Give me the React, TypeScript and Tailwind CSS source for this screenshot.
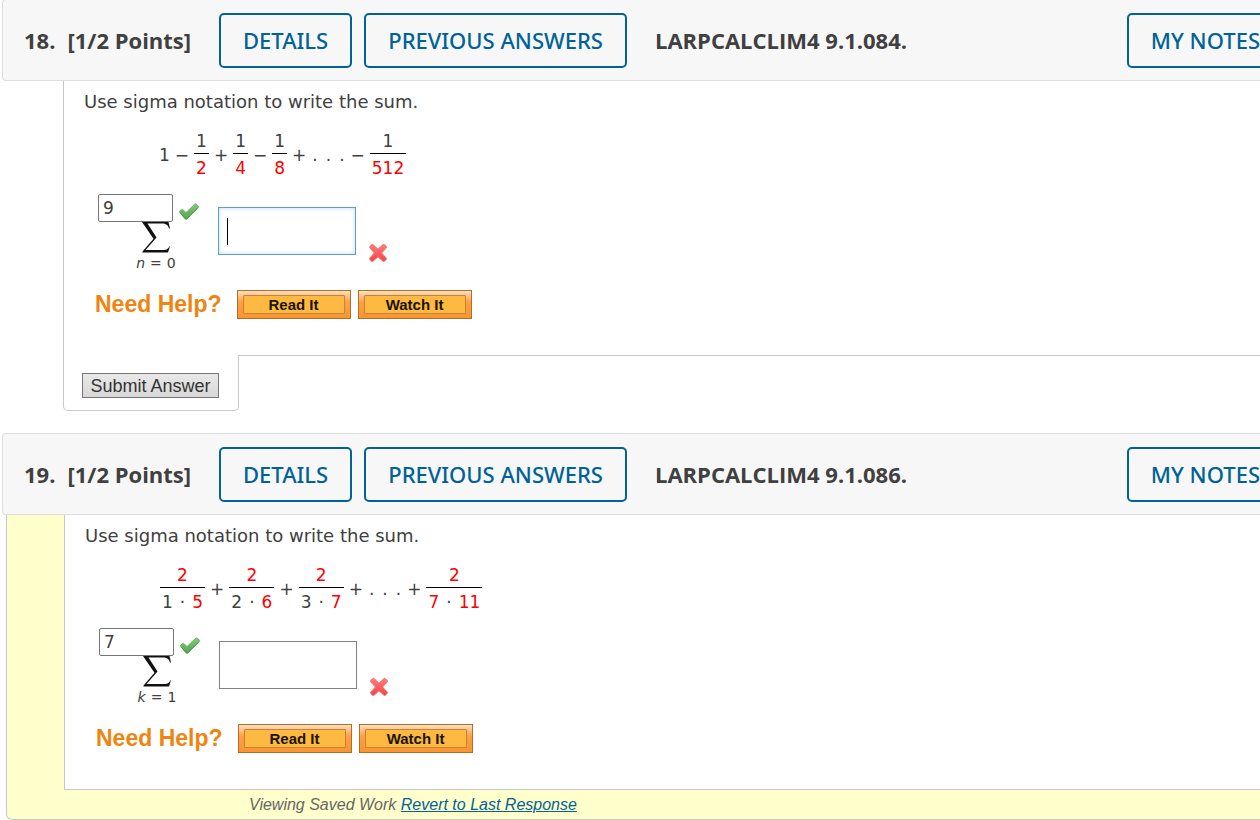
import { useState } from "react";
import type { ReactNode } from "react";

const outlineButton =
  "h-[55px] shrink-0 whitespace-nowrap rounded-[5px] border-2 border-[#006298] px-[22px] font-['Noto_Sans',sans-serif] text-[22px] font-medium text-[#006298]";

function QuestionHeader({ number, code }: { number: number; code: string }) {
  return (
    <header className="ml-[2px] flex h-[82px] items-center overflow-hidden rounded-l-[4px] border border-r-0 border-[#dedede] bg-[#f7f7f7] font-['Open_Sans',sans-serif] text-[22px] text-[#404040]">
      <h2 className="flex w-[216px] shrink-0 gap-3 whitespace-nowrap pl-[21px] font-bold">
        <span>{number}.</span>
        <span>[1/2 Points]</span>
      </h2>
      <button type="button" className={outlineButton}>DETAILS</button>
      <button type="button" className={`${outlineButton} ml-3`}>PREVIOUS ANSWERS</button>
      <h3 className="ml-7 shrink-0 whitespace-nowrap font-bold">{code}</h3>
      <button type="button" className={`${outlineButton} -mr-6 ml-auto`}>MY NOTES</button>
    </header>
  );
}

function Op({ children }: { children: ReactNode }) {
  return <span className="px-[5px]">{children}</span>;
}

function Dots() {
  return (
    <span className="flex gap-2 px-px">
      <span>.</span>
      <span>.</span>
      <span>.</span>
    </span>
  );
}

function Fraction({ top, children }: { top: ReactNode; children: ReactNode }) {
  return (
    <span className="flex flex-col items-center">
      <span className="leading-6">{top}</span>
      <span className="flex w-full justify-center gap-[7px] border-t border-black px-[2px] leading-7">
        {children}
      </span>
    </span>
  );
}

function Red({ children }: { children: ReactNode }) {
  return <span className="text-[#ff0000]">{children}</span>;
}

function CheckIcon() {
  return (
    <svg role="img" aria-label="Correct" width="22" height="20" viewBox="0 0 22 20">
      <defs>
        <linearGradient id="check-fill" x1="0" y1="0" x2="0" y2="1">
          <stop offset="0" stopColor="#84c97b" />
          <stop offset="1" stopColor="#55a551" />
        </linearGradient>
      </defs>
      <path
        d="M1.6 10.2 Q1.2 9.4 2 8.9 L3.8 7.6 Q4.6 7.2 5.3 7.9 L8 10.6 L16.6 2.3 Q17.5 1.6 18.3 2.3 L20.4 4 Q21 4.7 20.3 5.4 L9.2 16.8 Q8 17.8 7 16.8 Z"
        fill="url(#check-fill)"
        stroke="#6db566"
        strokeLinejoin="round"
      />
      <path d="M2.6 11.6 L7.4 16.7 Q8.1 17.2 8.9 16.6 L19.8 5.8" fill="none" stroke="#4c9549" strokeWidth="1" />
    </svg>
  );
}

function CrossIcon() {
  return (
    <svg role="img" aria-label="Incorrect" width="20" height="20" viewBox="0 0 20 20">
      <defs>
        <linearGradient id="cross-fill" x1="0" y1="0" x2="0" y2="1">
          <stop offset="0" stopColor="#ff7c7c" />
          <stop offset="1" stopColor="#f24444" />
        </linearGradient>
      </defs>
      <path
        d="M3.6 1.6 Q4.4 1 5.2 1.7 L10 6.2 L14.8 1.7 Q15.7 1 16.5 1.7 L18.2 3.4 Q18.8 4.2 18.1 5 L13.6 10 L18.1 15 Q18.8 15.8 18.1 16.6 L16.5 18.2 Q15.7 18.8 14.9 18.2 L10 13.8 L5.1 18.2 Q4.3 18.8 3.5 18.2 L1.8 16.6 Q1.1 15.8 1.8 15 L6.4 10 L1.9 5 Q1.2 4.2 1.9 3.4 Z"
        fill="url(#cross-fill)"
        stroke="#f27070"
      />
    </svg>
  );
}

function SigmaIcon() {
  return (
    <svg role="img" aria-label="Sum" width="28" height="31" viewBox="0 0 28 31">
      <path
        d="M0 0 H26.5 L28 6.5 H27 C26 3 24 1.6 20 1.6 H5.5 L14.5 15.5 L3.6 28 H21 C25 28 26.5 26.5 27.5 24 H28 L26 30.5 H0.5 V29.5 L11.5 16.8 Z"
        fill="#111"
      />
    </svg>
  );
}

function SigmaAnswer({ upper, lower, active }: { upper: string; lower: ReactNode; active?: boolean }) {
  const [limit, setLimit] = useState(upper);
  const [term, setTerm] = useState("");
  return (
    <div className="mt-3 flex pl-[14px]">
      <div className="w-[120px]">
        <div className="flex h-7 items-center gap-[5px]">
          <input
            aria-label="Upper limit"
            value={limit}
            onChange={(e) => setLimit(e.target.value)}
            className="h-7 w-[75px] rounded-[2px] border border-[#767676] bg-white px-1 text-[17px] text-[#404040]"
          />
          <span className="pt-2"><CheckIcon /></span>
        </div>
        <div className="flex w-[116px] flex-col items-center">
          <SigmaIcon />
          <span className="flex gap-[5px] text-[14px] leading-[21px]">{lower}</span>
        </div>
      </div>
      <div
        className={
          active
            ? "mt-[13px] flex h-12 w-[138px] items-center border border-[#6699cc] bg-white px-2 shadow-[inset_0_0_4px_#bbddff]"
            : "mt-[13px] flex h-12 w-[138px] items-center border border-[#808080] bg-white px-2"
        }
      >
        {active && <span aria-hidden="true" className="h-[27px] w-px shrink-0 bg-black" />}
        <input
          aria-label="Summand"
          value={term}
          onChange={(e) => setTerm(e.target.value)}
          className="h-full min-w-0 flex-1 bg-transparent text-[17px] outline-none"
        />
      </div>
      <span className="ml-3 mt-[49px]"><CrossIcon /></span>
    </div>
  );
}

function HelpButton({ children }: { children: ReactNode }) {
  return (
    <button
      type="button"
      className="h-[29px] w-[114px] border border-[#b06f28] bg-linear-to-b from-[#ffe0c0] via-[#ff9f45] via-40% to-[#f9952f] px-[5px] py-1 text-[15px] font-bold text-[#1a1400]"
    >
      <span className="flex h-full items-center justify-center rounded-[1px] border border-[#c58435] bg-[#fdb941] pt-px">
        {children}
      </span>
    </button>
  );
}

function NeedHelp() {
  return (
    <div className="mt-4 flex items-center gap-[7px] pl-[11px] font-['Liberation_Sans',sans-serif]">
      <span className="mr-2 text-[23px] font-bold leading-[29px] text-[#f08410]">Need Help?</span>
      <HelpButton>Read It</HelpButton>
      <HelpButton>Watch It</HelpButton>
    </div>
  );
}

function Prompt({ children }: { children: ReactNode }) {
  return (
    <>
      <p className="pt-[7px] text-[18px] leading-7">Use sigma notation to write the sum.</p>
      <div className="mt-[13px] flex items-center whitespace-nowrap pl-[75px]">{children}</div>
    </>
  );
}

export default function App() {
  return (
    <main className="overflow-hidden bg-white font-['DejaVu_Sans',sans-serif] text-[17px] text-[#404040]">
      <article>
        <div className="-mt-px">
          <QuestionHeader number={18} code="LARPCALCLIM4 9.1.084." />
        </div>
        <div className="ml-[63px]">
          <div className="border-l border-[#c8c8c8] pb-9 pl-5">
            <Prompt>
              <span>1</span>
              <Op>−</Op>
              <Fraction top="1"><Red>2</Red></Fraction>
              <Op>+</Op>
              <Fraction top="1"><Red>4</Red></Fraction>
              <Op>−</Op>
              <Fraction top="1"><Red>8</Red></Fraction>
              <Op>+</Op>
              <Dots />
              <Op>−</Op>
              <Fraction top="1"><Red>512</Red></Fraction>
            </Prompt>
            <SigmaAnswer upper="9" lower={<><i>n</i><span>=</span><span>0</span></>} active />
            <NeedHelp />
          </div>
          <div className="flex">
            <div className="w-[176px] shrink-0 rounded-b-[5px] border border-t-0 border-[#c8c8c8] pb-3 pl-[18px] pt-[18px]">
              <button
                type="button"
                className="block h-[25px] w-[137px] whitespace-nowrap border border-[#767676] bg-linear-to-b from-[#e8e8e8] to-[#d8d8d8] font-['Liberation_Sans',sans-serif] text-[18px] leading-[22px] text-[#333]"
              >
                Submit Answer
              </button>
            </div>
            <div className="flex-1 border-t border-[#c8c8c8]" />
          </div>
        </div>
      </article>

      <article className="mt-[22px]">
        <QuestionHeader number={19} code="LARPCALCLIM4 9.1.086." />
        <div className="ml-[6px] rounded-bl-[6px] border-b border-l border-[#c8c8c8] bg-[#ffffcc]">
          <div className="ml-[57px] border-b border-l border-[#c8c8c8] bg-white pb-9 pl-5">
            <Prompt>
              <Fraction top={<Red>2</Red>}><span>1</span><span>·</span><Red>5</Red></Fraction>
              <Op>+</Op>
              <Fraction top={<Red>2</Red>}><span>2</span><span>·</span><Red>6</Red></Fraction>
              <Op>+</Op>
              <Fraction top={<Red>2</Red>}><span>3</span><span>·</span><Red>7</Red></Fraction>
              <Op>+</Op>
              <Dots />
              <Op>+</Op>
              <Fraction top={<Red>2</Red>}><Red>7</Red><span>·</span><Red>11</Red></Fraction>
            </Prompt>
            <SigmaAnswer upper="7" lower={<><i>k</i><span>=</span><span>1</span></>} />
            <NeedHelp />
          </div>
          <p className="pl-[242px] font-['Liberation_Sans',sans-serif] text-[16px] italic leading-[29px] text-[#666]">
            Viewing Saved Work{" "}
            <a href="#revert" className="text-[#006298] underline">Revert to Last Response</a>
          </p>
        </div>
      </article>
    </main>
  );
}
